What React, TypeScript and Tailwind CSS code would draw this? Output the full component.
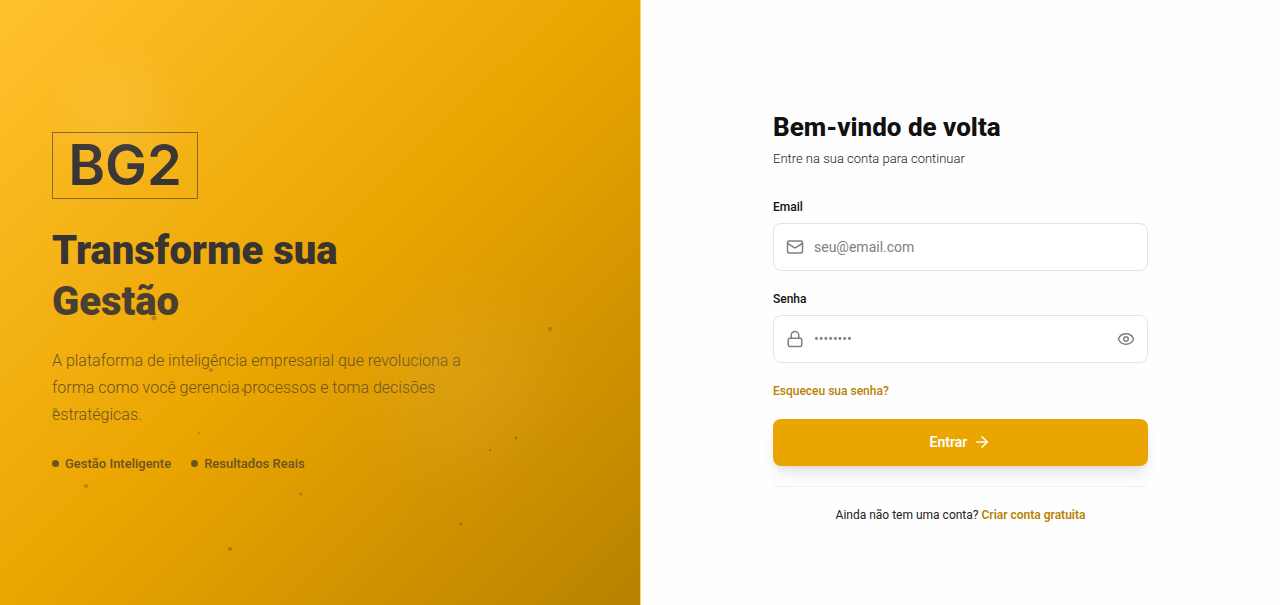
import { useState } from "react";
import type { FormEvent } from "react";
import { ArrowRight, Eye, EyeOff, Lock, Mail } from "lucide-react";

/** Floating particles over the brand panel (x/y in % of the panel). */
const PARTICLES = [
  { x: 24, y: 52.6, size: 5, opacity: 0.3 },
  { x: 32.9, y: 61.1, size: 4, opacity: 0.3 },
  { x: 38, y: 64.4, size: 4, opacity: 0.25 },
  { x: 8.6, y: 67.7, size: 5, opacity: 0.25 },
  { x: 31.1, y: 71.6, size: 2, opacity: 0.35 },
  { x: 39.5, y: 75.8, size: 2, opacity: 0.35 },
  { x: 13.4, y: 80.3, size: 4, opacity: 0.3 },
  { x: 47, y: 81.7, size: 3, opacity: 0.35 },
  { x: 36, y: 90.8, size: 4, opacity: 0.35 },
  { x: 72, y: 86.6, size: 3, opacity: 0.35 },
  { x: 76.5, y: 74.4, size: 2, opacity: 0.35 },
  { x: 80.7, y: 72.4, size: 3, opacity: 0.35 },
  { x: 85.9, y: 54.4, size: 4, opacity: 0.3 },
  { x: 83.9, y: 70.9, size: 1, opacity: 0.3 },
  { x: 86.7, y: 78.8, size: 1, opacity: 0.3 },
];

const HIGHLIGHTS = ["Gestão Inteligente", "Resultados Reais"];

const LABEL_CLASSES = "block text-xs leading-5 font-medium text-[#111111]";

const INPUT_CLASSES =
  "h-12 w-full rounded-lg border border-[#e3e3e3] bg-white pl-10 text-sm text-[#111111] placeholder:text-[#808080] focus:border-[#eba500] focus:outline-none";

export default function App() {
  return (
    <main className="flex min-h-screen bg-[#fefefe] font-['Roboto',sans-serif]">
      <BrandPanel />
      <section className="flex flex-1 items-center justify-center border-l border-[#ffd768] px-8 pt-7.5">
        <LoginForm />
      </section>
    </main>
  );
}

function BrandPanel() {
  return (
    <section className="relative flex w-1/2 items-center overflow-hidden bg-[linear-gradient(135deg,#ffc12d_0%,#eba500_50%,#b88200_100%)] px-13">
      {/* Glows */}
      <div className="absolute top-[11%] left-[11%] size-24 rounded-full bg-white/8 blur-xl" />
      <div className="absolute top-[50%] left-[60%] size-40 rounded-full bg-white/6 blur-2xl" />

      <div className="max-w-[420px] text-[#383434]">
        <div className="inline-flex h-[67px] w-[146px] items-center justify-center border border-[#383434]/60 font-['Inter',sans-serif] text-[56px] leading-none font-semibold">
          BG2
        </div>
        <h1 className="mt-6.5 text-[40px] leading-[51px] font-black">
          Transforme sua
          <span className="block text-[#4a4031]">Gestão</span>
        </h1>
        <p className="mt-5 text-base leading-[27px] font-light text-[#6b5324]">
          A plataforma de inteligência empresarial que revoluciona a forma como você gerencia
          processos e toma decisões estratégicas.
        </p>
        <ul className="mt-6.5 flex gap-5 text-[13px] leading-5 font-medium text-[#6b5324]">
          {HIGHLIGHTS.map((label) => (
            <li key={label} className="flex items-center gap-1.5">
              <span className="size-[7px] rounded-full bg-[#6b5324]" />
              {label}
            </li>
          ))}
        </ul>
      </div>

      {PARTICLES.map((p) => (
        <span
          key={`${p.x}-${p.y}`}
          className="absolute -translate-1/2 rounded-full bg-[#383434]"
          style={{ left: `${p.x}%`, top: `${p.y}%`, width: p.size, height: p.size, opacity: p.opacity }}
        />
      ))}
    </section>
  );
}

function LoginForm() {
  const [showPassword, setShowPassword] = useState(false);

  const handleSubmit = (e: FormEvent) => e.preventDefault();

  return (
    <div className="w-full max-w-[375px]">
      <h2 className="text-[26px] leading-8 font-extrabold text-[#111111]">Bem-vindo de volta</h2>
      <p className="mt-1 text-[13px] leading-6 font-light text-[#222222]">Entre na sua conta para continuar</p>

      <form onSubmit={handleSubmit} className="mt-6.5">
        <label htmlFor="email" className={LABEL_CLASSES}>
          Email
        </label>
        <div className="relative mt-1.5">
          <Mail className="absolute top-1/2 left-[13px] size-[18px] -translate-y-1/2 text-[#808080]" />
          <input id="email" type="email" placeholder="seu@email.com" className={INPUT_CLASSES} />
        </div>

        <div className="mt-[18px]">
          <label htmlFor="password" className={LABEL_CLASSES}>
            Senha
          </label>
          <div className="relative mt-1.5">
            <Lock className="absolute top-1/2 left-[13px] size-[18px] -translate-y-1/2 text-[#808080]" />
            <input
              id="password"
              type={showPassword ? "text" : "password"}
              placeholder="••••••••"
              className={INPUT_CLASSES}
            />
            <button
              type="button"
              aria-label={showPassword ? "Ocultar senha" : "Mostrar senha"}
              onClick={() => setShowPassword((v) => !v)}
              className="absolute top-1/2 right-[13px] -translate-y-1/2 text-[#808080]"
            >
              {showPassword ? <EyeOff className="size-[18px]" /> : <Eye className="size-[18px]" />}
            </button>
          </div>
        </div>

        <a href="#" className="mt-[18px] block text-xs leading-5 font-medium text-[#b88200]">
          Esqueceu sua senha?
        </a>

        <button
          type="submit"
          className="mt-[18px] flex h-[47px] w-full items-center justify-center gap-1.5 rounded-lg bg-[#eba500] text-sm font-semibold text-white shadow-lg"
        >
          Entrar
          <ArrowRight className="size-[18px]" />
        </button>
      </form>

      <p className="mt-5 border-t border-[#f0f0f0] pt-[18px] text-center text-xs leading-5 text-[#222222]">
        Ainda não tem uma conta?{" "}
        <a href="#" className="font-semibold text-[#b88200]">
          Criar conta gratuita
        </a>
      </p>
    </div>
  );
}
